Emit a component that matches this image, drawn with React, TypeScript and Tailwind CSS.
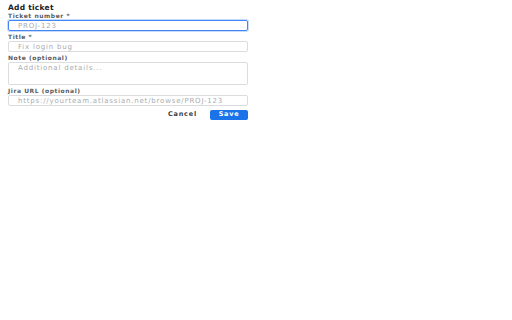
export default function App() {
  const label = "text-[6px] leading-[7px] font-bold text-[#575a5e] tracking-[0.55px]";
  const input = "h-[11px] w-full rounded-[2px] border border-[#dadce0] outline-none px-[9px] text-[7px] tracking-[0.8px] placeholder:text-[#a8acb0]";
  return (
    <div className="w-[512px] h-[320px] bg-white" style={{ fontFamily: '"DejaVu Sans", sans-serif' }}>
      <div className="w-[256px] px-[8px] pt-[3px] flex flex-col">
        <div className="text-[7.5px] leading-[10px] font-bold text-[#202124] tracking-[0.25px]">Add ticket</div>
        <label className={label + " -mt-[1px]"}>Ticket number *</label>
        <input
          className="mt-[1px] h-[11px] w-full rounded-[2px] border border-[#4285f4] outline-none px-[9px] text-[7px] tracking-[0.8px] placeholder:text-[#a8acb0]"
          placeholder="PROJ-123"
          style={{ boxShadow: '0 0 0 1px #c6dafc' }}
        />
        <label className={label + " mt-[2px]"}>Title *</label>
        <input className={input + " mt-[1px]"} placeholder="Fix login bug" />
        <label className={label + " mt-[2px]"}>Note (optional)</label>
        <textarea
          className="mt-[1px] h-[23px] w-full rounded-[2px] border border-[#dadce0] outline-none px-[9px] py-[1px] text-[7px] leading-[9px] tracking-[0.8px] resize-none placeholder:text-[#a8acb0]"
          placeholder="Additional details..."
        />
        <label className={label + " mt-[2px]"}>Jira URL (optional)</label>
        <input className={input + " mt-[1px]"} placeholder="https://yourteam.atlassian.net/browse/PROJ-123" />
        <div className="mt-[4px] flex justify-end items-center gap-[13px]">
          <button className="h-[10px] px-[0px] text-[6.5px] font-bold tracking-[0.8px] text-[#3c4043]">Cancel</button>
          <button className="h-[10px] w-[38px] rounded-[2px] bg-[#1a73e8] text-white text-[6.5px] font-bold tracking-[0.7px]">Save</button>
        </div>
      </div>
    </div>
  );
}
